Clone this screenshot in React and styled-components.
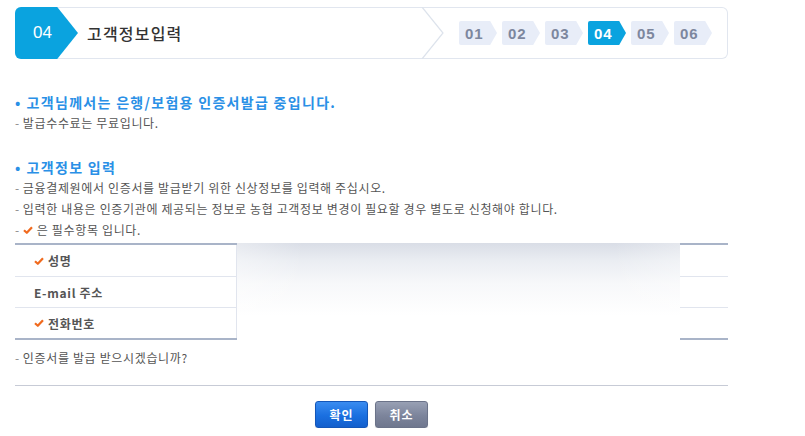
import React from "react";
import styled, { createGlobalStyle } from "styled-components";

const GlobalStyle = createGlobalStyle`
  html, body {
    margin: 0;
    padding: 0;
    background: #fff;
    font-family: "Noto Sans CJK KR", "Noto Sans", "Liberation Sans", sans-serif;
  }
`;

const Page = styled.div`
  width: 713px;
  padding: 7px 0 0 15px;
`;

const Header = styled.div`
  position: relative;
  height: 52px;
  border: 1px solid #e1e6ef;
  border-left: none;
  border-radius: 6px;
  display: flex;
  align-items: center;
  box-sizing: border-box;
`;

const CurrentTab = styled.div`
  width: 63px;
  height: 52px;
  margin-top: -1px;
  margin-bottom: -1px;
  background: #0aa3df;
  color: #fff;
  font-family: "Liberation Sans", Arial, sans-serif;
  font-size: 17px;
  display: flex;
  align-items: center;
  padding-left: 18px;
  box-sizing: border-box;
  border-radius: 6px 0 0 6px;
  clip-path: polygon(0 0, 67% 0, 100% 50%, 67% 100%, 0 100%);
`;

const Title = styled.div`
  margin-left: 9px;
  font-size: 16px;
  color: #333;
  font-weight: 500;
  letter-spacing: 1.2px;
  flex: 1;
`;

const Chevron = styled.svg`
  width: 24px;
  height: 52px;
  margin-top: -1px;
  margin-bottom: -1px;
`;

const Steps = styled.div`
  display: flex;
  gap: 5px;
  margin-left: 14px;
  margin-right: 15px;
`;

const Step = styled.div`
  width: 38px;
  height: 24px;
  box-sizing: border-box;
  padding-left: 6px;
  display: flex;
  align-items: center;
  font-family: "Liberation Sans", Arial, sans-serif;
  font-size: 15px;
  font-weight: bold;
  color: ${(p) => (p.$active ? "#fff" : "#7d879e")};
  background: ${(p) => (p.$active ? "#0aa3df" : "#e8edf8")};
  border-radius: 2px 0 0 2px;
  clip-path: polygon(0 0, 82% 0, 100% 50%, 82% 100%, 0 100%);
  letter-spacing: 1px;
`;

const Section = styled.div`
  margin-top: ${(p) => p.$top || 0}px;
`;

const SectionTitle = styled.div`
  font-size: 14px;
  font-weight: bold;
  color: #2a90e6;
  letter-spacing: 1.3px;
  line-height: 20px;
  &::before {
    content: "•";
    margin-right: 5px;
  }
`;

const Note = styled.div`
  font-size: 12px;
  color: #555;
  line-height: 21px;
  letter-spacing: 0.65px;
  display: flex;
  align-items: center;
  &::before {
    content: "-";
    color: #888;
    margin-right: 3px;
  }
`;

const Check = styled.svg`
  width: 10px;
  height: 8px;
  margin-right: 4px;
`;

const Table = styled.div`
  position: relative;
  margin-top: 3px;
  border-top: 2px solid #a9b4c8;
  border-bottom: 2px solid #a9b4c8;
`;

const Row = styled.div`
  display: grid;
  grid-template-columns: 222px 1fr;
  height: ${(p) => p.$h}px;
  border-top: ${(p) => (p.$first ? "none" : "1px solid #e1e5ee")};
`;

const Label = styled.div`
  border-right: 1px solid #e1e5ee;
  padding-left: 19px;
  display: flex;
  align-items: center;
  font-size: 12px;
  font-weight: bold;
  color: #555;
  letter-spacing: 0.7px;
`;

const Cell = styled.div``;

const Veil = styled.div`
  position: absolute;
  left: 222px;
  top: -2px;
  width: 443px;
  height: 97px;
  background:
    linear-gradient(90deg, rgba(255,255,255,0.35) 0%, rgba(255,255,255,0) 15%, rgba(255,255,255,0) 85%, rgba(255,255,255,0.3) 100%),
    linear-gradient(180deg, #d9dde6 0%, #eaedf2 18%, #f7f8fa 42%, #ffffff 75%);
`;

const Question = styled(Note)`
  margin-top: 7px;
`;

const Rule = styled.div`
  margin-top: 17px;
  height: 1px;
  background: #c7cbd6;
`;

const Buttons = styled.div`
  display: flex;
  justify-content: center;
  gap: 7px;
  margin-top: 15px;
`;

const Button = styled.button`
  width: 53px;
  height: 27px;
  border: 1px solid ${(p) => (p.$gray ? "#6b7389" : "#1456b8")};
  border-radius: 3px;
  background: ${(p) =>
    p.$gray
      ? "linear-gradient(180deg, #98a0b4 0%, #7c849b 55%, #6f778e 100%)"
      : "linear-gradient(180deg, #3a8cf0 0%, #1a6fe0 55%, #135fcc 100%)"};
  color: #fff;
  font-family: "Noto Sans CJK KR", sans-serif;
  font-size: 12px;
  font-weight: bold;
  letter-spacing: 1px;
  padding: 0;
  box-shadow: 0 1px 1px rgba(0,0,0,0.15);
`;

const CheckIcon = () => (
  <Check viewBox="0 0 10 8">
    <path d="M1 4.2 L3.8 6.8 L9 1.2" fill="none" stroke="#f06a1e" strokeWidth="2.2" strokeLinejoin="round" />
  </Check>
);

export default function App() {
  const steps = ["01", "02", "03", "04", "05", "06"];
  return (
    <>
      <GlobalStyle />
      <Page>
        <Header>
          <CurrentTab>04</CurrentTab>
          <Title>고객정보입력</Title>
          <Chevron viewBox="0 0 24 52">
            <path d="M1 0 L22 26 L1 52" fill="none" stroke="#dde3ec" strokeWidth="1.2" />
          </Chevron>
          <Steps>
            {steps.map((s) => (
              <Step key={s} $active={s === "04"}>
                {s}
              </Step>
            ))}
          </Steps>
        </Header>

        <Section $top={33}>
          <SectionTitle>고객님께서는 은행/보험용 인증서발급 중입니다.</SectionTitle>
          <Note>발급수수료는 무료입니다.</Note>
        </Section>

        <Section $top={24}>
          <SectionTitle>고객정보 입력</SectionTitle>
          <Note>금융결제원에서 인증서를 발급받기 위한 신상정보를 입력해 주십시오.</Note>
          <Note>입력한 내용은 인증기관에 제공되는 정보로 농협 고객정보 변경이 필요할 경우 별도로 신청해야 합니다.</Note>
          <Note>
            <CheckIcon />은 필수항목 입니다.
          </Note>
        </Section>

        <Table>
          <Row $first $h={31}>
            <Label>
              <CheckIcon />성명
            </Label>
            <Cell />
          </Row>
          <Row $h={30}>
            <Label>E-mail 주소</Label>
            <Cell />
          </Row>
          <Row $h={30}>
            <Label>
              <CheckIcon />전화번호
            </Label>
            <Cell />
          </Row>
          <Veil />
        </Table>

        <Question>인증서를 발급 받으시겠습니까?</Question>
        <Rule />

        <Buttons>
          <Button>확인</Button>
          <Button $gray>취소</Button>
        </Buttons>
      </Page>
    </>
  );
}
